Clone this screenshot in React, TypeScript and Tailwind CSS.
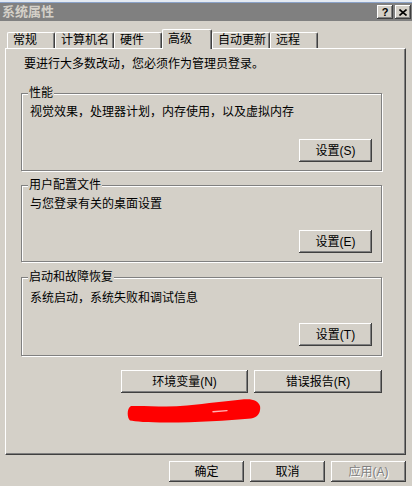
import React from "react";

const raised =
  "bg-[#d4d0c8] shadow-[inset_-1px_-1px_0_#404040,inset_1px_1px_0_#ffffff,inset_-2px_-2px_0_#808080]";

function Btn({
  children,
  className = "",
  disabled = false,
}: {
  children: React.ReactNode;
  className?: string;
  disabled?: boolean;
}) {
  return (
    <div
      className={`${raised} flex items-center justify-center text-[12px] leading-[14px] ${
        disabled ? "text-[#808080] [text-shadow:1px_1px_0_#ffffff]" : "text-black"
      } ${className}`}
    >
      {children}
    </div>
  );
}

function Group({
  title,
  desc,
  button,
  className = "",
  descClass = "mt-[4px]",
  btnClass = "mt-[19px]",
  pbClass = "pb-[8px]",
}: {
  title: string;
  desc: string;
  button: string;
  className?: string;
  descClass?: string;
  btnClass?: string;
  pbClass?: string;
}) {
  return (
    <fieldset
      className={`w-[361px] border border-[#808080] shadow-[inset_1px_1px_0_#ffffff,1px_1px_0_#ffffff] pl-[8px] pr-[9px] ${pbClass} ${className}`}
    >
      <legend className="-ml-[2px] px-[1px] bg-[#d4d0c8] text-[12px] leading-[14px] text-black">
        {title}
      </legend>
      <div className={`text-[12px] leading-[16px] text-black ${descClass}`}>{desc}</div>
      <div className={`flex justify-end ${btnClass}`}>
        <Btn className="w-[73px] h-[23px]">{button}</Btn>
      </div>
    </fieldset>
  );
}

const tabs = [
  { label: "常规", w: "w-[48px]" },
  { label: "计算机名", w: "w-[59px]" },
  { label: "硬件", w: "w-[48px]" },
  { label: "高级", w: "w-[50px]", active: true },
  { label: "自动更新", w: "w-[58px]" },
  { label: "远程", w: "w-[48px]" },
];

export default function App() {
  return (
    <div className="w-[412px] h-[486px] overflow-hidden bg-[#d4d0c8] font-['Liberation_Sans','Noto_Sans_CJK_SC',sans-serif] flex flex-col">
      {/* top sliver */}
      <div className="h-[3px] bg-[#e4eaf2] border-b border-[#8aa2c8]" />
      {/* title bar */}
      <div className="h-[18px] bg-[#808080] flex items-center justify-between pl-[2px] pr-[1px]">
        <span className="text-[13px] leading-[14px] font-bold text-[#d4d0c8]">系统属性</span>
        <div className="flex gap-[2px]">
          <div className={`${raised} w-[16px] h-[14px] flex items-center justify-center`}>
            <span className="text-[11px] leading-[11px] font-bold text-black font-['Liberation_Sans',sans-serif]">
              ?
            </span>
          </div>
          <div className={`${raised} w-[16px] h-[14px] flex items-center justify-center`}>
            <svg width="8" height="7" viewBox="0 0 8 7">
              <path d="M0.5 0.5 L7.5 6.5 M7.5 0.5 L0.5 6.5" stroke="#000" strokeWidth="1.6" />
            </svg>
          </div>
        </div>
      </div>
      {/* tabs */}
      <div className="h-[27px] flex items-end pl-[7px]">
        {tabs.map((t) =>
          t.active ? (
            <div
              key={t.label}
              className={`${t.w} h-[20px] -mb-[1px] relative z-10 bg-[#d4d0c8] border-l border-t border-r border-l-white border-t-white border-r-[#404040] rounded-t-[2px] shadow-[inset_-1px_0_0_#808080] pl-[5px] pt-[1px] text-[12px] leading-[16px] text-black`}
            >
              {t.label}
            </div>
          ) : (
            <div
              key={t.label}
              className={`${t.w} h-[16px] bg-[#d4d0c8] border-l border-t border-r border-l-white border-t-white border-r-[#404040] rounded-t-[2px] shadow-[inset_-1px_0_0_#808080] pl-[5px] text-[12px] leading-[15px] text-black`}
            >
              {t.label}
            </div>
          )
        )}
      </div>
      {/* panel */}
      <div className="ml-[5px] w-[401px] h-[407px] border border-t-white border-l-white border-r-[#404040] border-b-[#404040] shadow-[inset_-1px_-1px_0_#808080] pl-[15px] pr-[23px] pt-[7px] flex flex-col">
        <div className="pl-[3px] text-[12px] leading-[16px] text-black">
          要进行大多数改动，您必须作为管理员登录。
        </div>
        <Group
          className="mt-[14px]"
          title="性能"
          desc="视觉效果，处理器计划，内存使用，以及虚拟内存"
          button="设置(S)"
        />
        <Group
          className="mt-[7px]"
          title="用户配置文件"
          desc="与您登录有关的桌面设置"
          button="设置(E)"
          btnClass="mt-[18px]"
        />
        <Group
          className="mt-[8px]"
          title="启动和故障恢复"
          desc="系统启动，系统失败和调试信息"
          button="设置(T)"
          descClass="mt-[6px]"
          btnClass="mt-[17px]"
          pbClass="pb-[9px]"
        />
        <div className="flex justify-end gap-[6px] mt-[14px]">
          <Btn className="w-[127px] h-[23px]">环境变量(N)</Btn>
          <Btn className="w-[128px] h-[23px]">错误报告(R)</Btn>
        </div>
        <svg className="ml-[106px] mt-[6px]" width="134" height="24" viewBox="0 0 134 24">
          <path
            d="M4 7 C20 6.5 40 8.5 60 6.5 C80 4.5 100 2 117 0.3 C126 -0.5 131.5 2 133 7 C134 13 131 18.5 124 19.5 C100 21.5 70 23.5 40 23.5 C20 23.5 8 22.5 3 21.5 C0 19.5 -0.5 9 4 7 Z"
            fill="#ff0000"
          />
          <path d="M86 12.8 L100 11.6" stroke="#ffb4b4" strokeWidth="1.4" strokeLinecap="round" />
        </svg>
      </div>
      {/* dialog buttons */}
      <div className="flex justify-end gap-[6px] pr-[6px] mt-[6px]">
        <Btn className="w-[75px] h-[21px]">确定</Btn>
        <Btn className="w-[75px] h-[21px]">取消</Btn>
        <Btn className="w-[75px] h-[21px]" disabled>
          应用(A)
        </Btn>
      </div>
    </div>
  );
}
